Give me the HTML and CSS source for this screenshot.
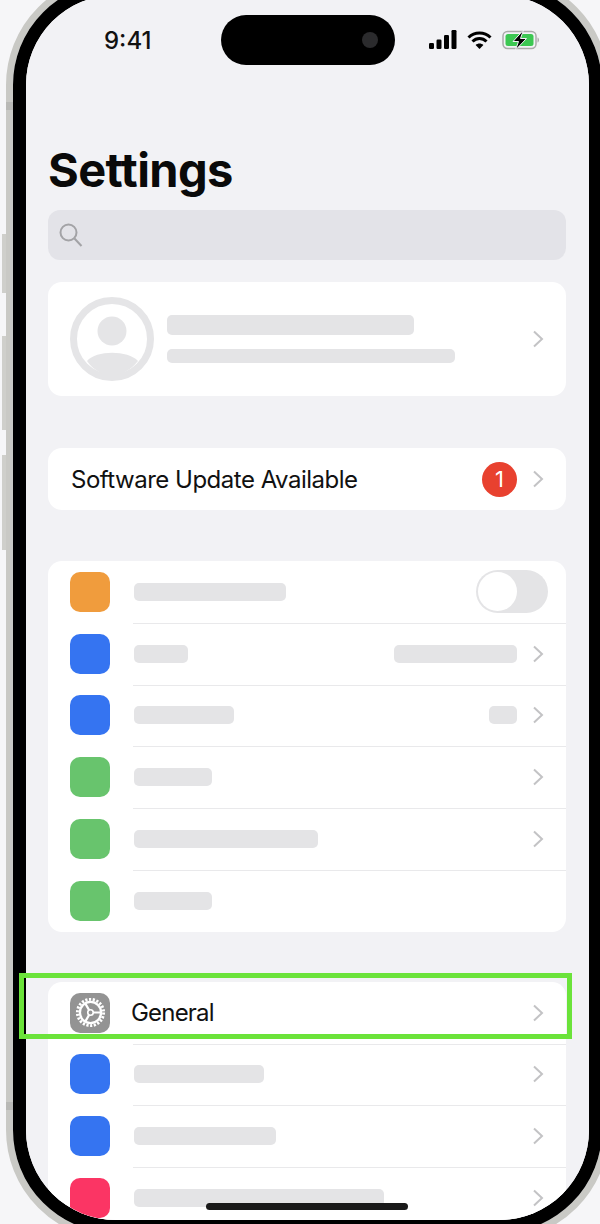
FILE: index.html
```html
<!DOCTYPE html>
<html>
<head>
    <title>Settings</title>
    <link rel="stylesheet" href="styles.css">
</head>
<body>
    <div class="phone">
        <span class="side_button btn_one"></span>
        <span class="side_button btn_two"></span>
        <span class="side_button btn_three"></span>
        <span class="band band_top"></span>
        <span class="band band_bottom"></span>
        <div class="bezel">
            <div class="screen">
                <div class="status_bar">
                    <span class="time">9:41</span>
                    <div class="island"><span class="camera"></span></div>
                    <div class="status_icons">
                        <svg width="28" height="20" viewBox="0 0 28 20"><rect x="0" y="13" width="5" height="6" rx="1.2"/><rect x="7.5" y="9.5" width="5" height="9.5" rx="1.2"/><rect x="15" y="5" width="5" height="14" rx="1.2"/><rect x="22.5" y="0" width="5" height="19" rx="1.2"/></svg>
                        <svg width="25" height="20" viewBox="0 0 25 20"><path d="M1.5 7.5 C7.5 1.5 17.5 1.5 23.5 7.5" class="wifi_line"/><path d="M5.5 11.5 C9.5 7.5 15.5 7.5 19.5 11.5" class="wifi_line"/><path d="M12.5 19 L8.6 15 C10.8 13 14.2 13 16.4 15 Z"/></svg>
                        <svg width="39" height="22" viewBox="0 0 39 22"><rect x="1" y="2.5" width="33" height="17" rx="4.5" class="batt_case"/><rect x="3.5" y="5" width="28" height="12" rx="2.5" class="batt_fill"/><path d="M35.5 8.5 C37.5 9 37.5 13 35.5 13.5 Z" class="batt_cap"/><path d="M21.5 1 L11 12.5 H16.5 L13.5 21 L24.5 9.5 H18.5 Z" class="batt_bolt"/></svg>
                    </div>
                </div>

                <h1 class="title">Settings</h1>

                <div class="search_box">
                    <svg width="26" height="26" viewBox="0 0 26 26"><circle cx="10.5" cy="10.5" r="8" class="search_line"/><path d="M16.5 16.5 L23.5 24" class="search_line"/></svg>
                </div>

                <div class="card profile">
                    <svg class="avatar" width="84" height="84" viewBox="0 0 84 84">
                        <circle cx="42" cy="42" r="38.5" class="avatar_ring"/>
                        <circle cx="42" cy="34" r="14.5" class="avatar_fill"/>
                        <path d="M17 64 C26 53 58 53 68 64 C60 74 51 78 42 78 C33 78 24 74 17 64 Z" class="avatar_fill"/>
                    </svg>
                    <div class="profile_text">
                        <span class="bar name_bar"></span>
                        <span class="bar sub_bar"></span>
                    </div>
                    <svg class="chevron" width="12" height="18" viewBox="0 0 12 18"><path d="M2 1.5 L10 9 L2 16.5"/></svg>
                </div>

                <div class="card update_row">
                    <span class="label">Software Update Available</span>
                    <span class="badge">1</span>
                    <svg class="chevron" width="12" height="18" viewBox="0 0 12 18"><path d="M2 1.5 L10 9 L2 16.5"/></svg>
                </div>

                <div class="card list">
                    <div class="row">
                        <span class="app orange"></span><span class="bar w152"></span>
                        <span class="toggle"><span class="knob"></span></span>
                    </div>
                    <div class="row">
                        <span class="app blue"></span><span class="bar w54"></span>
                        <span class="bar value w123"></span>
                        <svg class="chevron" width="12" height="18" viewBox="0 0 12 18"><path d="M2 1.5 L10 9 L2 16.5"/></svg>
                    </div>
                    <div class="row">
                        <span class="app blue"></span><span class="bar w100"></span>
                        <span class="bar value w28"></span>
                        <svg class="chevron" width="12" height="18" viewBox="0 0 12 18"><path d="M2 1.5 L10 9 L2 16.5"/></svg>
                    </div>
                    <div class="row">
                        <span class="app green"></span><span class="bar w78"></span>
                        <svg class="chevron end" width="12" height="18" viewBox="0 0 12 18"><path d="M2 1.5 L10 9 L2 16.5"/></svg>
                    </div>
                    <div class="row">
                        <span class="app green"></span><span class="bar w184"></span>
                        <svg class="chevron end" width="12" height="18" viewBox="0 0 12 18"><path d="M2 1.5 L10 9 L2 16.5"/></svg>
                    </div>
                    <div class="row">
                        <span class="app green"></span><span class="bar w78"></span>
                    </div>
                </div>

                <div class="card list last_list">
                    <div class="row">
                        <span class="app gray">
                            <svg width="31" height="31" viewBox="0 0 34 34">
                                <circle cx="17" cy="17" r="14.4" class="gear_teeth"/>
                                <circle cx="17" cy="17" r="11.6" class="gear_ring"/>
                                <path d="M20 17 H28 M15.5 14.4 L11.5 7.5 M15.5 19.6 L11.5 26.5" class="gear_spoke"/>
                                <circle cx="17" cy="17" r="3" class="gear_hub"/>
                            </svg>
                        </span>
                        <span class="label general">General</span>
                        <svg class="chevron end" width="12" height="18" viewBox="0 0 12 18"><path d="M2 1.5 L10 9 L2 16.5"/></svg>
                    </div>
                    <div class="row">
                        <span class="app blue"></span><span class="bar w130"></span>
                        <svg class="chevron end" width="12" height="18" viewBox="0 0 12 18"><path d="M2 1.5 L10 9 L2 16.5"/></svg>
                    </div>
                    <div class="row">
                        <span class="app blue"></span><span class="bar w142"></span>
                        <svg class="chevron end" width="12" height="18" viewBox="0 0 12 18"><path d="M2 1.5 L10 9 L2 16.5"/></svg>
                    </div>
                    <div class="row">
                        <span class="app pink"></span><span class="bar w250"></span>
                        <svg class="chevron end" width="12" height="18" viewBox="0 0 12 18"><path d="M2 1.5 L10 9 L2 16.5"/></svg>
                    </div>
                </div>

                <span class="home_bar"></span>
            </div>
        </div>
    </div>
    <div class="highlight"></div>
</body>
</html>
```

FILE: styles.css
```css
body {
    margin: 0;
    width: 600px;
    height: 1224px;
    overflow: hidden;
    position: relative;
    background-color: #f6f6f8;
    font-family: "Inter", "Liberation Sans", sans-serif;
    color: #111;
}

/* device shell */
.phone {
    position: relative;
    width: 589px;
    margin: -25px 0 0 6px;
    border: 7px solid #c9c9c5;
    border-radius: 110px;
}
.bezel {
    border: 13px solid #000;
    border-radius: 103px;
}
.screen {
    position: relative;
    height: 1225px;
    overflow: hidden;
    box-sizing: border-box;
    padding: 0 23px 0 22px;
    background-color: #f2f2f5;
    border-radius: 90px;
}
.side_button {
    position: absolute;
    left: -11px;
    width: 4px;
    background-color: #cfcfcb;
}
.btn_one { top: 252px; height: 59px; }
.btn_two { top: 354px; height: 94px; }
.btn_three { top: 473px; height: 95px; }
.band {
    position: absolute;
    left: -7px;
    width: 7px;
    height: 8px;
    background-color: #b9b9b6;
}
.band_top { top: 120px; }
.band_bottom { top: 1120px; }

/* status bar */
.status_bar {
    height: 90px;
    display: flex;
    align-items: center;
    margin-right: -8px;
}
.time {
    width: 48px;
    margin-left: 56px;
    font-size: 24px;
    font-weight: 500;
    white-space: nowrap;
}
.island {
    width: 174px;
    height: 50px;
    margin-left: 69px;
    border-radius: 25px;
    background-color: #000;
    display: flex;
    align-items: center;
    justify-content: flex-end;
    padding-right: 17px;
    box-sizing: border-box;
}
.camera {
    width: 16px;
    height: 16px;
    border-radius: 50%;
    background-color: #2b2b2d;
}
.status_icons {
    display: flex;
    align-items: center;
    gap: 10px;
    margin-left: 34px;
}
.status_icons svg { display: block; }
.wifi_line {
    fill: none;
    stroke: #000;
    stroke-width: 3;
}
.batt_case {
    fill: none;
    stroke: #aaa;
    stroke-width: 1.5;
}
.batt_fill { fill: #3cc752; }
.batt_cap { fill: #aaa; }
.batt_bolt {
    fill: #000;
    stroke: #f2f2f5;
    stroke-width: 1;
}

.title {
    margin: 0;
    padding-top: 58px;
    font-size: 47px;
    line-height: 54px;
    font-weight: 700;
    letter-spacing: -0.6px;
    color: #0a0a0a;
}

.search_box {
    height: 50px;
    margin-top: 13px;
    padding-left: 10px;
    border-radius: 12px;
    background-color: #e3e3e8;
    display: flex;
    align-items: center;
}
.search_line {
    fill: none;
    stroke: #a3a3a6;
    stroke-width: 2;
}

/* cards */
.card {
    background-color: #fff;
    border-radius: 14px;
    display: flex;
    align-items: center;
}
.profile {
    height: 114px;
    margin-top: 22px;
    padding-left: 22px;
}
.avatar_ring {
    fill: none;
    stroke: #e5e5e7;
    stroke-width: 7;
}
.avatar_fill { fill: #e5e5e7; }
.profile_text {
    display: flex;
    flex-direction: column;
    gap: 14px;
    margin-left: 13px;
}
.bar {
    display: block;
    height: 18px;
    border-radius: 5px;
    background-color: #e4e4e6;
}
.name_bar { width: 247px; height: 20px; }
.sub_bar { width: 288px; height: 14px; }
.chevron {
    margin-left: auto;
    margin-right: 22px;
    flex-shrink: 0;
}
.chevron path {
    fill: none;
    stroke: #c3c3c5;
    stroke-width: 2;
}
.update_row {
    height: 62px;
    margin-top: 52px;
    padding-left: 23px;
}
.label {
    font-size: 24px;
    letter-spacing: -0.5px;
    white-space: nowrap;
}
.badge {
    width: 35px;
    height: 35px;
    margin-left: auto;
    margin-right: 15px;
    border-radius: 50%;
    background-color: #e8412f;
    color: #fff;
    font-size: 22px;
    line-height: 35px;
    text-align: center;
}
.update_row .chevron { margin-left: 0; }

.list {
    display: block;
    margin-top: 51px;
}
.last_list { margin-top: 50px; }
.row {
    height: 61.8px;
    box-sizing: border-box;
    padding-left: 22px;
    display: flex;
    align-items: center;
    position: relative;
}
.row + .row::before {
    content: "";
    position: absolute;
    top: 0;
    left: 85px;
    right: 0;
    height: 1px;
    background-color: #e9e9eb;
}
.app {
    width: 40px;
    height: 40px;
    margin-right: 24px;
    border-radius: 10px;
    flex-shrink: 0;
    display: flex;
    align-items: center;
    justify-content: center;
}
.orange { background-color: #f09c3d; }
.blue { background-color: #3574f1; }
.green { background-color: #68c46d; }
.pink { background-color: #fb3564; }
.gray { background-color: #939393; }
.general {
    margin-left: -3px;
    letter-spacing: -0.8px;
}

.w28 { width: 28px; }
.w54 { width: 54px; }
.w78 { width: 78px; }
.w100 { width: 100px; }
.w123 { width: 123px; }
.w130 { width: 130px; }
.w142 { width: 142px; }
.w152 { width: 152px; }
.w184 { width: 184px; }
.w250 { width: 250px; }
.value { margin-left: auto; margin-right: 15px; }
.value + .chevron { margin-left: 0; }

.toggle {
    width: 72px;
    height: 43px;
    margin-left: auto;
    margin-right: 18px;
    border-radius: 22px;
    background-color: #e4e4e6;
    display: flex;
    align-items: center;
    padding-left: 2px;
    box-sizing: border-box;
}
.knob {
    width: 39px;
    height: 39px;
    border-radius: 50%;
    background-color: #fff;
}

/* gear icon */
.gear_teeth {
    fill: none;
    stroke: #fff;
    stroke-width: 3.2;
    stroke-dasharray: 2.4 1.71;
}
.gear_ring {
    fill: none;
    stroke: #fff;
    stroke-width: 2.6;
}
.gear_spoke {
    fill: none;
    stroke: #fff;
    stroke-width: 2.4;
}
.gear_hub {
    fill: none;
    stroke: #fff;
    stroke-width: 1.8;
}

.home_bar {
    position: absolute;
    left: 180px;
    bottom: 10px;
    width: 202px;
    height: 7px;
    border-radius: 4px;
    background-color: #1a1a1a;
}

/* green callout over the General row */
.highlight {
    position: absolute;
    left: 19px;
    top: 973px;
    width: 553px;
    height: 66px;
    box-sizing: border-box;
    border: 5px solid #6be33a;
}
```
